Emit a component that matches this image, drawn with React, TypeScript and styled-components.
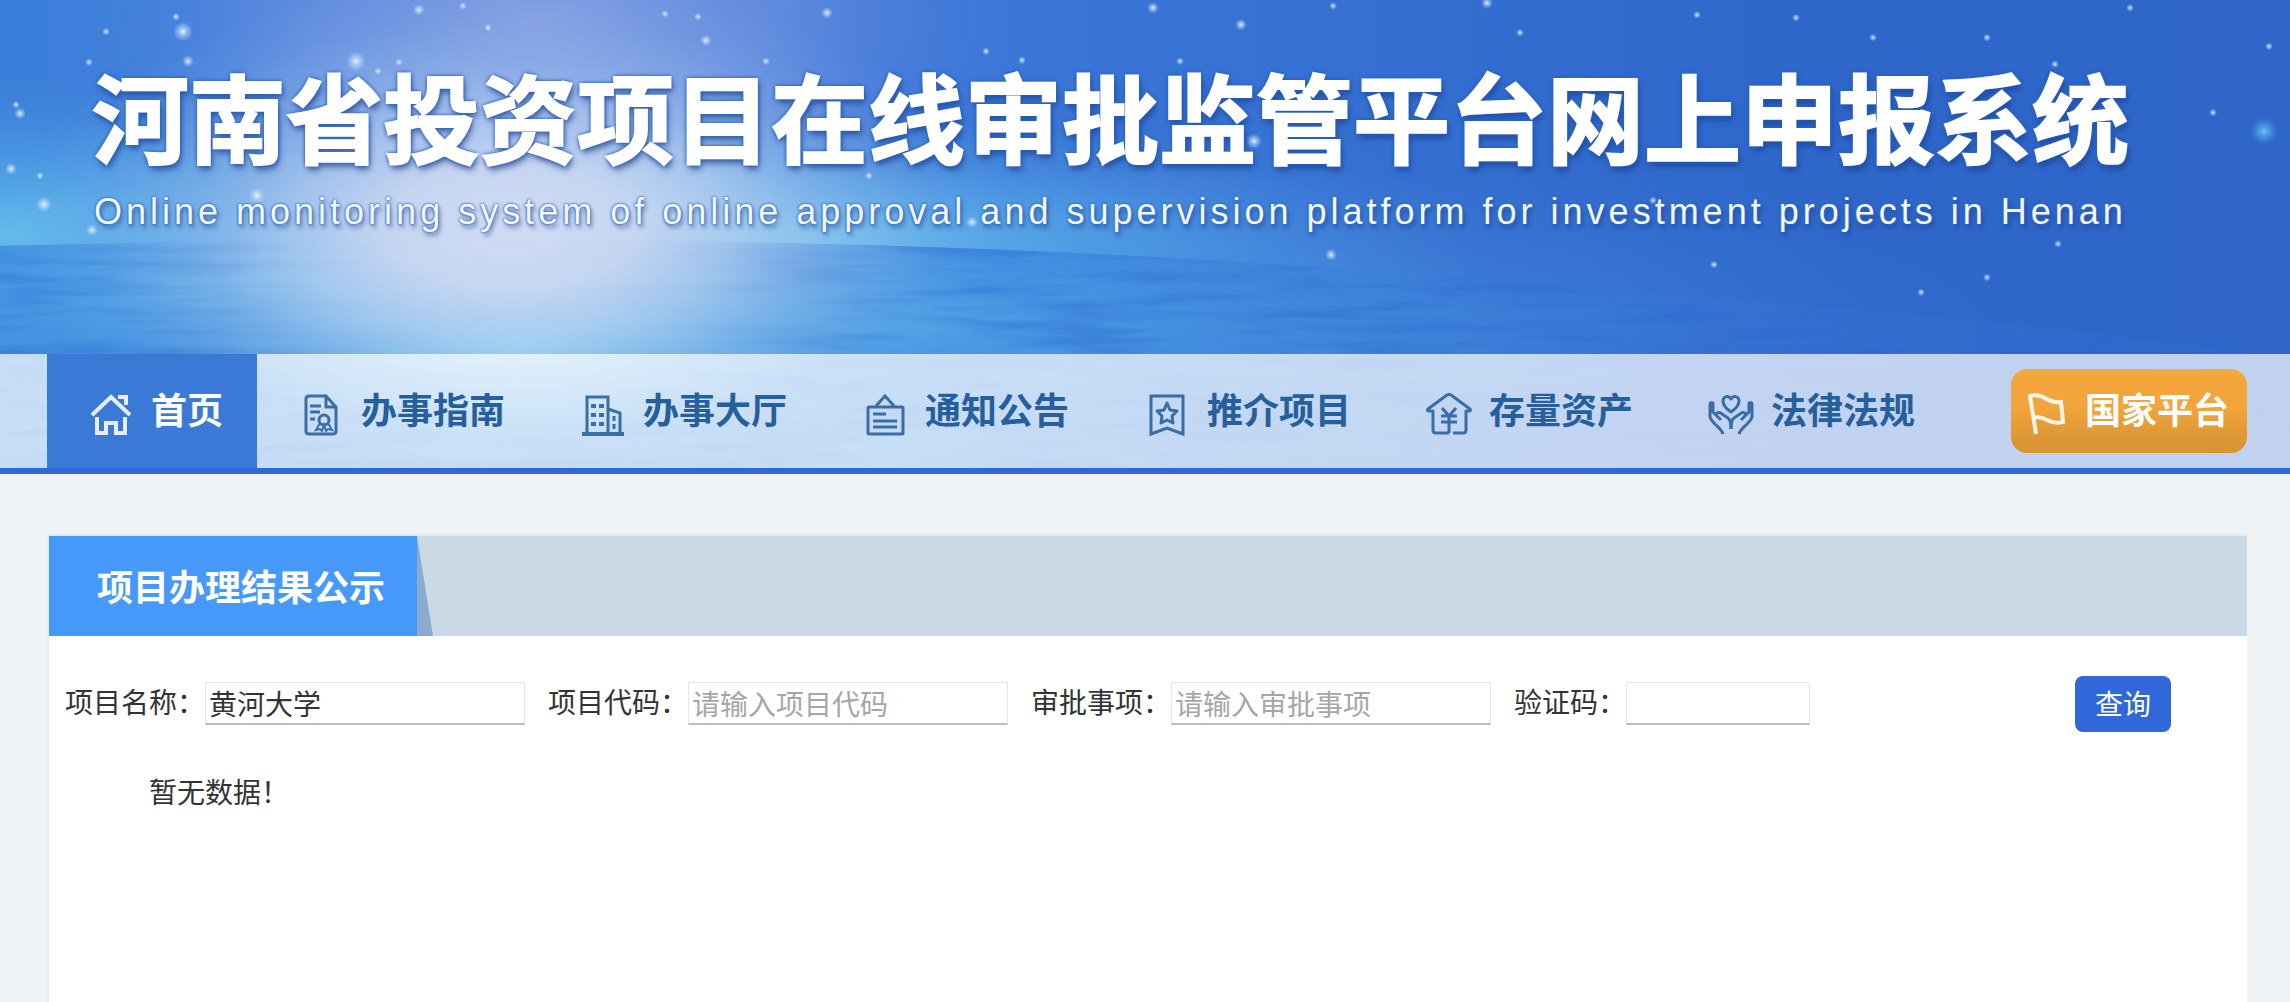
import React from "react";
import styled, { createGlobalStyle, css } from "styled-components";

const GlobalStyle = createGlobalStyle`
  *, *::before, *::after { box-sizing: border-box; }
  body {
    margin: 0;
    background: #eff3f6;
    color: #333;
    font-family: "Noto Sans CJK SC", sans-serif;
    font-size: 28px;
  }
`;

const Page = styled.div`
  min-height: 100vh;
  display: flex;
  flex-direction: column;
`;

/* ---------- header ---------- */

const Header = styled.header`
  position: relative;
  border-bottom: 6px solid #3068da;
  background: #3673d3;
`;

const Scenery = styled.svg`
  position: absolute;
  inset: 0;
  width: 100%;
  height: 100%;
`;

const Banner = styled.div`
  position: relative;
  padding: 60px 92px 120px;
  white-space: nowrap;
`;

const Title = styled.h1`
  margin: 0;
  font-size: 97px;
  line-height: 108px;
  font-weight: 700;
  color: #fff;
  -webkit-text-stroke: 2px #fff;
  text-shadow: 0 0 3px #2a62c0, 0 0 4px #2a62c0, 0 0 5px #2a62c0, 2px 5px 6px rgba(20, 50, 120, 0.6);
`;

const Subtitle = styled.p`
  margin: 22px 0 0 2px;
  font-family: "Liberation Sans", Arial, sans-serif;
  font-size: 36px;
  line-height: 44px;
  letter-spacing: 4px;
  color: #f2f7ff;
  text-shadow: 0 0 2px #2a62c0, 0 0 3px #3a6fc8, 2px 4px 4px rgba(20, 50, 120, 0.5);
`;

const Nav = styled.nav`
  position: relative;
  display: flex;
  align-items: center;
  justify-content: space-between;
  padding: 0 43px 0 47px;
  background: rgba(255, 255, 255, 0.7);
`;

const NavList = styled.ul`
  display: flex;
  margin: 0;
  padding: 0;
  list-style: none;
`;

const linkText = css`
  display: flex;
  align-items: center;
  font-size: 36px;
  font-weight: 700;
  line-height: 52px;
  text-decoration: none;
  white-space: nowrap;
`;

const NavLink = styled.a<{ $active?: boolean }>`
  ${linkText}
  gap: 16px;
  padding: 28px 34px 34px 40px;
  color: ${(p) => (p.$active ? "#fff" : "#265f9b")};
  background: ${(p) => (p.$active ? "#3a7ad6" : "transparent")};
`;

const PlatformLink = styled.a`
  ${linkText}
  gap: 16px;
  padding: 13px 18px 19px 10px;
  border-radius: 16px;
  color: #fff;
  background: linear-gradient(#f0ae45, #f3a53b 10%, #f2a53b 45%, #d99433 90%);
`;

const Icon = styled.svg`
  flex: none;
  width: 48px;
  height: 48px;
  margin: 9px 0 -5px;
  fill: none;
  stroke: currentColor;
  stroke-width: 3;
  opacity: 0.88;
`;

/* ---------- result panel ---------- */

const Main = styled.main`
  flex: 1;
  display: flex;
  padding: 60px 43px 0 47px;
`;

const Panel = styled.section`
  flex: 1;
  border: solid #e3eaf1;
  border-width: 2px 0 0 2px;
  background: #fff;
`;

const PanelHead = styled.div`
  display: flex;
  background: #c9d9e6;
`;

const PanelTitle = styled.h2`
  margin: 0;
  padding: 23px 32px 25px 48px;
  font-size: 36px;
  line-height: 52px;
  font-weight: 700;
  color: #fff;
  background: #4699f8;
`;

const Slant = styled.span`
  width: 16px;
  background: #8babd1;
  clip-path: polygon(0 0, 100% 100%, 0 100%);
`;

const SearchForm = styled.form`
  display: flex;
  align-items: center;
  padding: 40px 76px 40px 16px;
`;

const Field = styled.label`
  display: flex;
  align-items: flex-start;
  margin-right: 23px;
  padding-bottom: 2px;
  line-height: 38px;
  white-space: nowrap;
`;

const TextInput = styled.input<{ $width: number }>`
  width: ${(p) => p.$width}px;
  height: 43px;
  padding: 0 3px;
  border: 1px solid #e6e6e6;
  border-bottom: 2px solid #bdbdbd;
  background: #fff;
  color: #333;
  font: inherit;
  outline: none;
  &::placeholder {
    color: #a6a6a6;
    opacity: 1;
  }
`;

const SearchButton = styled.button`
  margin-left: auto;
  width: 96px;
  height: 56px;
  padding: 0 0 2px;
  border: 0;
  border-radius: 8px;
  background: #3068da;
  color: #fff;
  font: inherit;
`;

const Empty = styled.p`
  margin: 0;
  padding: 0 100px;
  line-height: 38px;
`;

/* ---------- drawings ---------- */

type Star = [number, number, number];

const STARS: Star[] = [
  [183, 32, 4], [356, 62, 4], [419, 10, 2], [463, 6, 1], [488, 28, 1], [106, 32, 1],
  [89, 63, 1], [188, 62, 2], [399, 63, 1], [378, 72, 1], [665, 14, 1], [698, 17, 1],
  [706, 41, 2], [827, 13, 2], [986, 52, 1], [1022, 61, 1], [766, 62, 1], [20, 115, 2],
  [16, 106, 1], [11, 171, 2], [40, 178, 1], [44, 207, 3], [92, 233, 2], [257, 198, 3],
  [176, 17, 1], [869, 178, 1], [972, 225, 2], [1153, 8, 2], [1241, 25, 2], [1333, 6, 1],
  [1487, 3, 2], [1520, 33, 1], [1697, 15, 1], [1796, 18, 1], [1873, 38, 1], [1987, 38, 1],
  [2130, 8, 1], [2269, 47, 1], [2055, 65, 1], [2213, 114, 1], [1254, 143, 3], [1331, 258, 2],
  [1714, 268, 1], [1921, 296, 1], [1987, 281, 1], [2058, 247, 1], [1653, 203, 1], [1180, 62, 1],
];

const SEA = "M0 249 Q300 241 600 243 Q900 246 1150 260 Q1700 290 2290 360 V474 H0 Z";

function SkyAndSea() {
  return (
    <Scenery viewBox="0 0 2290 474" preserveAspectRatio="none" aria-hidden="true">
      <defs>
        <linearGradient id="sky" x1="0" x2="1" y1="0" y2="0">
          <stop offset="0" stopColor="#3b7fda" />
          <stop offset="0.25" stopColor="#4a80dc" />
          <stop offset="0.5" stopColor="#3874d5" />
          <stop offset="0.8" stopColor="#2e66ca" />
          <stop offset="1" stopColor="#2f66c8" />
        </linearGradient>
        <linearGradient id="sea" x1="0" x2="1" y1="0" y2="0">
          <stop offset="0" stopColor="#4492e0" />
          <stop offset="0.4" stopColor="#428fe0" />
          <stop offset="0.55" stopColor="#3a80da" stopOpacity="0.8" />
          <stop offset="0.75" stopColor="#3776d6" stopOpacity="0.4" />
          <stop offset="1" stopColor="#3470d2" stopOpacity="0.2" />
        </linearGradient>
        <radialGradient id="haze">
          <stop offset="0" stopColor="#69c4ee" stopOpacity="0.95" />
          <stop offset="0.5" stopColor="#58aeea" stopOpacity="0.5" />
          <stop offset="1" stopColor="#4a90e0" stopOpacity="0" />
        </radialGradient>
        <radialGradient id="violet">
          <stop offset="0" stopColor="#92a6e6" stopOpacity="0.8" />
          <stop offset="0.5" stopColor="#7f9ae2" stopOpacity="0.5" />
          <stop offset="1" stopColor="#5a84dc" stopOpacity="0" />
        </radialGradient>
        <radialGradient id="sun">
          <stop offset="0" stopColor="#d1dcf3" />
          <stop offset="0.25" stopColor="#cfdbf3" stopOpacity="0.92" />
          <stop offset="0.45" stopColor="#c3d7f2" stopOpacity="0.7" />
          <stop offset="0.65" stopColor="#b0ceef" stopOpacity="0.38" />
          <stop offset="0.85" stopColor="#9dc4ee" stopOpacity="0.1" />
          <stop offset="1" stopColor="#8fc0ee" stopOpacity="0" />
        </radialGradient>
        <radialGradient id="star">
          <stop offset="0" stopColor="#fff" stopOpacity="0.9" />
          <stop offset="0.35" stopColor="#d5e9ff" stopOpacity="0.6" />
          <stop offset="1" stopColor="#bfe0ff" stopOpacity="0" />
        </radialGradient>
        <filter id="ripples" x="0" y="0" width="1" height="1" colorInterpolationFilters="sRGB">
          <feTurbulence type="fractalNoise" baseFrequency="0.007 0.08" numOctaves="3" seed="8" />
          <feColorMatrix values="0 0 0 0 0.16  0 0 0 0 0.4  0 0 0 0 0.82  3 0 0 0 -1.3" />
          <feComposite in2="SourceGraphic" operator="in" />
        </filter>
      </defs>
      <rect width="2290" height="474" fill="url(#sky)" />
      <ellipse cx="540" cy="20" rx="460" ry="230" fill="url(#violet)" />
      <ellipse cx="0" cy="240" rx="480" ry="160" fill="url(#haze)" />
      <ellipse cx="820" cy="245" rx="660" ry="130" fill="url(#haze)" />
      <ellipse cx="1300" cy="330" rx="800" ry="170" fill="url(#haze)" opacity="0.25" />
      <path d={SEA} fill="url(#sea)" />
      <ellipse cx="300" cy="290" rx="500" ry="90" fill="url(#haze)" opacity="0.5" />
      <ellipse cx="900" cy="330" rx="800" ry="110" fill="url(#haze)" opacity="0.35" />
      <path d={SEA} fill="#2a66cc" filter="url(#ripples)" opacity="0.36" />
      <ellipse cx="520" cy="350" rx="380" ry="130" fill="url(#haze)" />
      <ellipse cx="510" cy="230" rx="500" ry="250" fill="url(#sun)" />
      {STARS.map(([x, y, r]) => (
        <circle key={`${x}-${y}`} cx={x} cy={y} r={r * 2 + 2} fill="url(#star)" />
      ))}
      <circle cx="2264" cy="133" r="14" fill="url(#haze)" />
    </Scenery>
  );
}

const HomeIcon = () => (
  <Icon viewBox="0 0 48 48" aria-hidden="true">
    <path d="M5 24 24 6l19 18M31 6h8v8M10 26v16h9V32h10v10h9V26" strokeWidth="4" />
  </Icon>
);

const GuideIcon = () => (
  <Icon viewBox="0 0 48 48" aria-hidden="true">
    <path d="M29 5H12q-3 0-3 3v32q0 3 3 3h24q3 0 3-3V16ZM29 5v11h10" />
    <path d="M13 15h11M13 21h10M13 28h5" />
    <circle cx="27" cy="29" r="5" />
    <path d="m23 32-4 7 4-1 2 2 2-6 2 6 2-2 4 1-4-7" strokeWidth="2" />
  </Icon>
);

const HallIcon = () => (
  <Icon viewBox="0 0 48 48" aria-hidden="true">
    <path d="M3 43h42" strokeWidth="4" />
    <path d="M8 42V6h21v36M29 18l12 4v20" />
    <path d="M12 15h5M20 15h5M12 24h5M20 24h5M12 33h5M20 33h5" strokeWidth="4" />
    <path d="M35 25v5M35 33v5" />
  </Icon>
);

const NoticeIcon = () => (
  <Icon viewBox="0 0 48 48" aria-hidden="true">
    <rect x="7" y="16" width="35" height="27" rx="1" />
    <path d="m15 15 9-10 9 10" />
    <path d="M12 23h13M12 30h24M12 36h24" />
  </Icon>
);

const PromoteIcon = () => (
  <Icon viewBox="0 0 48 48" aria-hidden="true">
    <path d="M8 5h32v38l-16-6-16 6Z" />
    <path d="m24 12 3 7 7 1-5 5 1 7-6-3-6 3 1-7-5-5 7-1Z" strokeLinejoin="round" />
  </Icon>
);

const AssetIcon = () => (
  <Icon viewBox="0 0 48 48" aria-hidden="true" strokeLinejoin="round">
    <path d="M24 42H11q-3 0-3-3V20H3q-1-1 0-2L22 4q2-1 4 0l19 14q1 1 0 2h-4v19q0 3-3 3H28" />
    <path d="m17 17 7 8 7-8M24 25v17M16 25h16M16 31h16" />
  </Icon>
);

const LawIcon = () => (
  <Icon viewBox="0 0 48 48" aria-hidden="true" strokeLinejoin="round">
    <path d="M24 21c-6-4-8-8-8-11 0-5 6-6 8-2 2-4 8-3 8 2 0 3-2 7-8 11Z" />
    <path d="M16 43c-2-7-10-9-13-17V13q0-2 3-1v9l8 8M9 23q3-3 6 0l6 4q3 2 3 11" />
    <path d="M32 43c2-7 10-9 13-17V13q0-2-3-1v9l-8 8M39 23q-3-3-6 0l-6 4q-3 2-3 11" />
  </Icon>
);

const FlagIcon = () => (
  <Icon viewBox="0 0 48 48" aria-hidden="true">
    <path d="m15 43-6-38q7-2 13 1 9 6 18 5l2 20q-9 2-16-2-7-4-14-2" strokeWidth="4" />
  </Icon>
);

const NAV = [
  { label: "首页", icon: <HomeIcon />, active: true },
  { label: "办事指南", icon: <GuideIcon /> },
  { label: "办事大厅", icon: <HallIcon /> },
  { label: "通知公告", icon: <NoticeIcon /> },
  { label: "推介项目", icon: <PromoteIcon /> },
  { label: "存量资产", icon: <AssetIcon /> },
  { label: "法律法规", icon: <LawIcon /> },
];

const FIELDS = [
  { name: "projectName", label: "项目名称：", width: 320, value: "黄河大学" },
  { name: "projectCode", label: "项目代码：", width: 320, placeholder: "请输入项目代码" },
  { name: "approvalItem", label: "审批事项：", width: 320, placeholder: "请输入审批事项" },
  { name: "captcha", label: "验证码：", width: 184 },
];

export default function App() {
  return (
    <Page>
      <GlobalStyle />
      <Header>
        <SkyAndSea />
        <Banner>
          <Title>河南省投资项目在线审批监管平台网上申报系统</Title>
          <Subtitle>
            Online monitoring system of online approval and supervision platform for investment projects in Henan
          </Subtitle>
        </Banner>
        <Nav>
          <NavList>
            {NAV.map((item) => (
              <li key={item.label}>
                <NavLink href="#" $active={item.active}>
                  {item.icon}
                  {item.label}
                </NavLink>
              </li>
            ))}
          </NavList>
          <PlatformLink href="#">
            <FlagIcon />
            国家平台
          </PlatformLink>
        </Nav>
      </Header>
      <Main>
        <Panel>
          <PanelHead>
            <PanelTitle>项目办理结果公示</PanelTitle>
            <Slant />
          </PanelHead>
          <SearchForm onSubmit={(e) => e.preventDefault()}>
            {FIELDS.map((f) => (
              <Field key={f.name}>
                {f.label}
                <TextInput
                  type="text"
                  name={f.name}
                  $width={f.width}
                  defaultValue={f.value}
                  placeholder={f.placeholder}
                />
              </Field>
            ))}
            <SearchButton type="submit">查询</SearchButton>
          </SearchForm>
          <Empty>暂无数据！</Empty>
        </Panel>
      </Main>
    </Page>
  );
}
